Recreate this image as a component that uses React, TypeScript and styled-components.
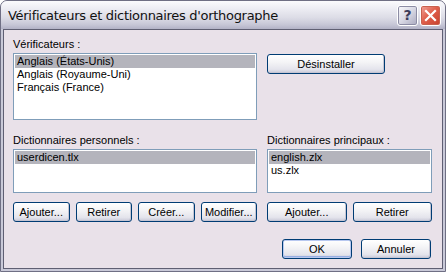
import styled, { createGlobalStyle } from "styled-components";

const GlobalStyle = createGlobalStyle`
  html, body {
    margin: 0;
    padding: 0;
    background: #ffffff;
  }
`;

const Window = styled.div`
  width: 446px;
  height: 272px;
  box-sizing: border-box;
  display: flex;
  flex-direction: column;
  background: #c9c9d8;
  border: 1px solid #6f6f84;
  border-radius: 7px 7px 0 0;
  overflow: hidden;
  font-family: "Liberation Sans", Arial, sans-serif;
`;

const TitleBar = styled.div`
  height: 28px;
  flex: none;
  display: flex;
  align-items: center;
  padding: 0 4px 0 7px;
  background: linear-gradient(
    to bottom,
    #fbfbfd 0%,
    #eeeef4 25%,
    #dcdce6 60%,
    #c6c6d6 85%,
    #b2b2c6 100%
  );
`;

const Title = styled.div`
  flex: 1;
  font-family: "DejaVu Sans", sans-serif;
  font-size: 13px;
  letter-spacing: -0.3px;
  color: #111;
  padding-top: 1px;
`;

const CaptionButton = styled.div<{ close?: boolean }>`
  width: 21px;
  height: 21px;
  box-sizing: border-box;
  margin-left: 2px;
  border-radius: 3px;
  border: 1px solid #ffffff;
  display: flex;
  align-items: center;
  justify-content: center;
  background: ${({ close }) =>
    close
      ? "linear-gradient(135deg, #f0a49a 0%, #e0604c 45%, #c7402c 100%)"
      : "linear-gradient(135deg, #fbfbfd 0%, #d8d8e4 50%, #a8a8be 100%)"};
  box-shadow: inset 0 0 0 1px ${({ close }) => (close ? "#c8604e" : "#8c8ca4")};
  color: ${({ close }) => (close ? "#fff" : "#3c3c5a")};
  font-family: "DejaVu Sans", sans-serif;
  font-size: 14px;
  font-weight: bold;
`;

const Body = styled.div`
  flex: 1;
  margin: 0 2px 2px;
  border: 1px solid #5f5f73;
  background: #e9e1e9;
  padding: 7px 11px 0 9px;
  display: flex;
  flex-direction: column;
  font-size: 11px;
  color: #000;
`;

const Row = styled.div`
  display: grid;
  grid-template-columns: 244px 165px;
  column-gap: 10px;
`;

const Label = styled.div`
  height: 13px;
  line-height: 13px;
  margin-bottom: 2px;
  margin-top: 1px;
`;

const ListBox = styled.div<{ h: number }>`
  height: ${({ h }) => h}px;
  box-sizing: border-box;
  border: 1px solid #7f9db9;
  background: #fff;
  padding: 1px 1px;
`;

const Item = styled.div<{ selected?: boolean }>`
  height: 13px;
  line-height: 13px;
  padding-left: 2px;
  background: ${({ selected }) => (selected ? "#b4b4bc" : "transparent")};
`;

const Button = styled.div<{ def?: boolean }>`
  height: 20px;
  box-sizing: border-box;
  border: 1px solid #003c74;
  border-radius: 3px;
  display: flex;
  align-items: center;
  justify-content: center;
  background: linear-gradient(to bottom, #ffffff 0%, #f4f4f6 40%, #e4e4ec 80%, #c9c9d8 100%);
  box-shadow: ${({ def }) =>
    def ? "inset 0 0 0 1px #b8c8f0, inset 0 -1px 0 1px #97aee2" : "inset -1px -1px 0 #c5c5d3"};
  font-size: 11px;
  white-space: nowrap;
`;

const ButtonStrip = styled.div<{ cols: number }>`
  display: grid;
  grid-template-columns: repeat(${({ cols }) => cols}, 1fr);
  column-gap: 6px;
  margin-top: 9px;
`;

const Footer = styled.div`
  display: flex;
  justify-content: flex-end;
  gap: 9px;
  margin-top: 17px;
`;

const FooterButton = styled(Button)`
  width: 70px;
`;

const Side = styled.div<{ offset?: number }>`
  display: flex;
  flex-direction: column;
  padding-top: ${({ offset }) => offset ?? 0}px;
`;

const UninstallButton = styled(Button)`
  width: 118px;
`;

const LowerRow = styled(Row)`
  margin-top: 13px;
`;

export default function App() {
  return (
    <>
      <GlobalStyle />
      <Window>
        <TitleBar>
          <Title>Vérificateurs et dictionnaires d'orthographe</Title>
          <CaptionButton>?</CaptionButton>
          <CaptionButton close>
            <svg width="13" height="13" viewBox="0 0 13 13">
              <path d="M2 2 L11 11 M11 2 L2 11" stroke="#fff" strokeWidth="2.2" strokeLinecap="square" />
            </svg>
          </CaptionButton>
        </TitleBar>
        <Body>
          <Row>
            <Side>
              <Label>Vérificateurs :</Label>
              <ListBox h={67}>
                <Item selected>Anglais (États-Unis)</Item>
                <Item>Anglais (Royaume-Uni)</Item>
                <Item>Français (France)</Item>
              </ListBox>
            </Side>
            <Side offset={17}>
              <UninstallButton>Désinstaller</UninstallButton>
            </Side>
          </Row>
          <LowerRow>
            <Side>
              <Label>Dictionnaires personnels :</Label>
              <ListBox h={44}>
                <Item selected>userdicen.tlx</Item>
              </ListBox>
              <ButtonStrip cols={4}>
                <Button>Ajouter...</Button>
                <Button>Retirer</Button>
                <Button>Créer...</Button>
                <Button>Modifier...</Button>
              </ButtonStrip>
            </Side>
            <Side>
              <Label>Dictionnaires principaux :</Label>
              <ListBox h={44}>
                <Item selected>english.zlx</Item>
                <Item>us.zlx</Item>
              </ListBox>
              <ButtonStrip cols={2}>
                <Button>Ajouter...</Button>
                <Button>Retirer</Button>
              </ButtonStrip>
            </Side>
          </LowerRow>
          <Footer>
            <FooterButton def>OK</FooterButton>
            <FooterButton>Annuler</FooterButton>
          </Footer>
        </Body>
      </Window>
    </>
  );
}
